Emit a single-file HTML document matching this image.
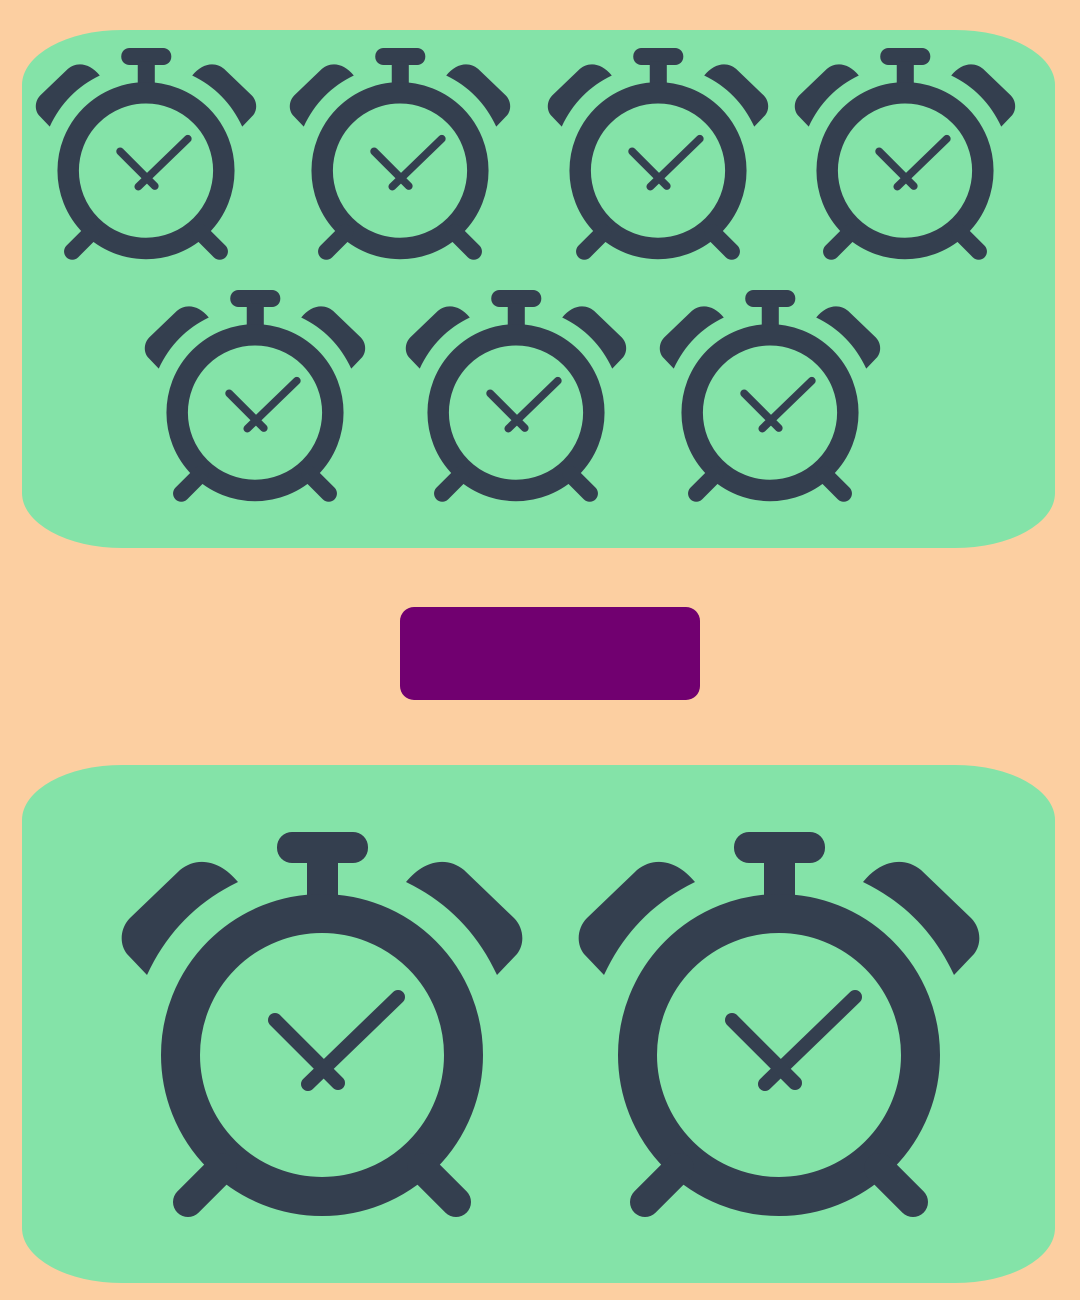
<!DOCTYPE html>
<html><head><style>
body{margin:0;width:1080px;height:1300px;background:#fccfa1;position:relative;overflow:hidden}
.p{position:absolute;left:22px;width:1033px;background:#84e3a8;border-radius:100px/55px}
.b{position:absolute;left:400px;top:607px;width:300px;height:93px;background:#710070;border-radius:14px}
svg{position:absolute;left:0;top:0}
</style></head><body>
<div class="p" style="top:30px;height:518px"></div>
<div class="p" style="top:765px;height:518px"></div>
<div class="b"></div>
<svg width="1080" height="1300" viewBox="0 0 1080 1300">
<defs>
<g id="c" fill="#343f4f" stroke="#343f4f">
<rect x="155" y="0" width="91" height="31" rx="15" stroke="none"/>
<rect x="185" y="25" width="31" height="60" stroke="none"/>
<circle cx="200" cy="223" r="141.5" fill="none" stroke-width="39"/>
<path stroke="none" d="M25,143 L5,122 C-3,112 -2,96 8,86 L58,38 C75,24 98,28 116,50 C75,70 45,100 25,143 Z"/>
<path stroke="none" d="M375,143 L395,122 C403,112 402,96 392,86 L342,38 C325,24 302,28 284,50 C325,70 355,100 375,143 Z"/>
<g stroke-width="30" stroke-linecap="round" fill="none">
<line x1="100" y1="336" x2="66" y2="370"/>
<line x1="300" y1="336" x2="334" y2="370"/>
</g>
<g stroke-width="14" stroke-linecap="round" fill="none">
<line x1="276" y1="165" x2="186" y2="252"/>
<line x1="153" y1="188" x2="216" y2="251"/>
</g>
</g>
</defs>
<use href="#c" transform="translate(36,48) scale(0.55)"/>
<use href="#c" transform="translate(290,48) scale(0.55)"/>
<use href="#c" transform="translate(548,48) scale(0.55)"/>
<use href="#c" transform="translate(795,48) scale(0.55)"/>
<use href="#c" transform="translate(145,290) scale(0.55)"/>
<use href="#c" transform="translate(406,290) scale(0.55)"/>
<use href="#c" transform="translate(660,290) scale(0.55)"/>
<use href="#c" transform="translate(122,832)"/>
<use href="#c" transform="translate(579,832)"/>
</svg>
</body></html>
